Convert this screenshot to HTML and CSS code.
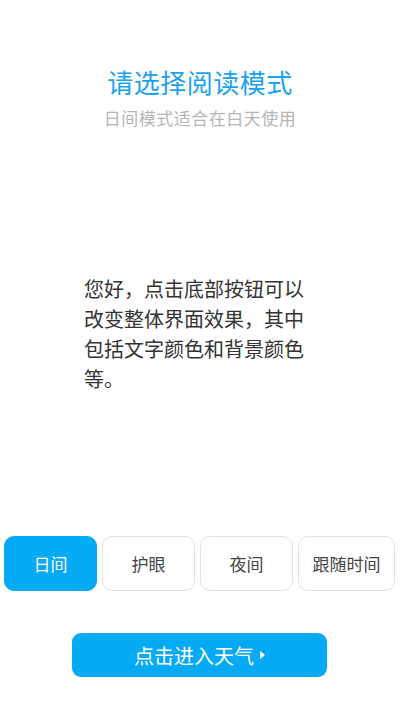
FILE: index.html
```html
<!DOCTYPE html>
<html lang="zh-CN">
<head>
<meta charset="utf-8">
<title>请选择阅读模式</title>
<link rel="stylesheet" href="styles.css">
</head>
<body>
<div class="page">
  <header class="header">
    <h1 class="title">请选择阅读模式</h1>
    <p class="subtitle">日间模式适合在白天使用</p>
  </header>
  <p class="intro">您好，点击底部按钮可以改变整体界面效果，其中包括文字颜色和背景颜色等。</p>
  <div class="modes">
    <button class="mode mode-active">日间</button>
    <button class="mode">护眼</button>
    <button class="mode">夜间</button>
    <button class="mode">跟随时间</button>
  </div>
  <div class="enter-wrap">
    <button class="enter">点击进入天气<svg class="arrow" width="5" height="8" viewBox="0 0 5 8"><path d="M0 0 L5 4 L0 8 Z" fill="#ffffff"/></svg></button>
  </div>
</div>
</body>
</html>
```

FILE: styles.css
```css
* { box-sizing: border-box; }
html, body { margin: 0; padding: 0; background: #ffffff; }
body {
  font-family: "Noto Sans CJK SC", "Noto Sans", sans-serif;
}
.page {
  width: 400px;
  height: 711px;
  display: flex;
  flex-direction: column;
  padding-top: 65px;
}
.header { text-align: center; }
.title {
  margin: 0;
  font-size: 26px;
  line-height: 34px;
  font-weight: 400;
  color: #1ba2ee;
  letter-spacing: 0.5px;
}
.subtitle {
  margin: 7px 0 0;
  font-size: 17px;
  line-height: 24px;
  color: #b5b5b5;
  letter-spacing: 0.5px;
}
.intro {
  margin: 144px 0 0;
  padding: 0 84px 0 84px;
  font-size: 20px;
  line-height: 30px;
  color: #333333;
}
.modes {
  margin-top: 142px;
  display: grid;
  grid-template-columns: 93px 93px 93px 1fr;
  gap: 5px;
  padding: 0 5px 0 4px;
}
.mode {
  height: 55px;
  border: 1px solid #e2e2e2;
  border-radius: 10px;
  background: #ffffff;
  color: #444444;
  font-family: inherit;
  font-size: 17px;
  padding: 0;
}
.mode-active {
  background: #05aaf5;
  border-color: #05aaf5;
  color: #ffffff;
}
.enter-wrap {
  margin-top: 42px;
  display: flex;
  padding-left: 72px;
}
.enter {
  width: 255px;
  height: 44px;
  border: none;
  border-radius: 9px;
  background: #05aaf5;
  color: #ffffff;
  font-family: inherit;
  font-size: 20px;
  display: flex;
  align-items: center;
  justify-content: center;
  gap: 6px;
  padding: 0;
}
.arrow { display: block; }
```
